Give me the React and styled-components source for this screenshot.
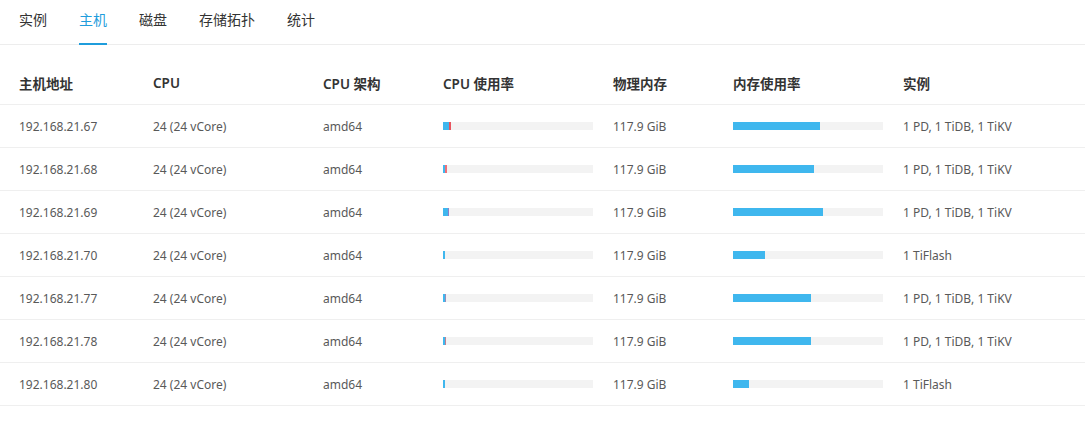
import React from "react";
import styled, { createGlobalStyle } from "styled-components";

const Global = createGlobalStyle`
  html, body { margin: 0; padding: 0; background: #fff; }
  body { font-family: "Noto Sans", "Noto Sans CJK SC", sans-serif; }
`;

const Page = styled.div`
  width: 1085px;
  background: #fff;
`;

const Tabs = styled.div`
  display: flex;
  gap: 32px;
  padding-left: 19px;
  height: 45px;
  border-bottom: 1px solid #ededed;
  box-sizing: border-box;
`;

const Tab = styled.div`
  position: relative;
  font-size: 14px;
  line-height: 40px;
  height: 44px;
  box-sizing: border-box;
  color: ${(p) => (p.$active ? "#1f9ddc" : "#333")};
  &::after {
    content: "";
    display: ${(p) => (p.$active ? "block" : "none")};
    position: absolute;
    left: 0;
    right: 0;
    bottom: -1px;
    height: 2px;
    background: #1f9ddc;
  }
`;

const Table = styled.div`
  margin-top: 16px;
`;

const Row = styled.div`
  display: grid;
  grid-template-columns: 134px 170px 120px 170px 120px 170px 1fr;
  height: ${(p) => (p.$head ? "44px" : "43px")};
  border-bottom: 1px solid #efefef;
  box-sizing: border-box;
  align-items: center;
`;

const Cell = styled.div`
  padding-left: 19px;
  font-size: ${(p) => (p.$head ? "13.5px" : "12px")};
  font-weight: ${(p) => (p.$head ? 600 : 400)};
  color: ${(p) => (p.$head ? "#333" : "#595959")};
  white-space: nowrap;
  padding-top: ${(p) => (p.$head ? "0" : "1px")};
`;

const Bar = styled.div`
  display: flex;
  width: 150px;
  height: 8px;
  background: #f3f3f3;
  margin-left: 19px;
  margin-top: -1px;
`;

const Seg = styled.div`
  height: 100%;
  background: ${(p) => p.$color};
`;

const BLUE = "#3fb7ee";

const rows = [
  { ip: "192.168.21.67", cpu: [[6, BLUE], [2, "#e9545e"]], mem: 87, inst: "1 PD, 1 TiDB, 1 TiKV" },
  { ip: "192.168.21.68", cpu: [[2, BLUE], [2, "#ee7078"]], mem: 81, inst: "1 PD, 1 TiDB, 1 TiKV" },
  { ip: "192.168.21.69", cpu: [[5, BLUE], [1, "#8f7fc8"]], mem: 90, inst: "1 PD, 1 TiDB, 1 TiKV" },
  { ip: "192.168.21.70", cpu: [[2, BLUE]], mem: 32, inst: "1 TiFlash" },
  { ip: "192.168.21.77", cpu: [[2, BLUE], [1, "#9a8bb8"]], mem: 78, inst: "1 PD, 1 TiDB, 1 TiKV" },
  { ip: "192.168.21.78", cpu: [[2, BLUE], [1, "#c07f92"]], mem: 78, inst: "1 PD, 1 TiDB, 1 TiKV" },
  { ip: "192.168.21.80", cpu: [[2, BLUE]], mem: 16, inst: "1 TiFlash" },
];

const heads = ["主机地址", "CPU", "CPU 架构", "CPU 使用率", "物理内存", "内存使用率", "实例"];

export default function App() {
  return (
    <Page>
      <Global />
      <Tabs>
        <Tab>实例</Tab>
        <Tab $active>主机</Tab>
        <Tab>磁盘</Tab>
        <Tab>存储拓扑</Tab>
        <Tab>统计</Tab>
      </Tabs>
      <Table>
        <Row $head>
          {heads.map((h) => (
            <Cell $head key={h}>{h}</Cell>
          ))}
        </Row>
        {rows.map((r) => (
          <Row key={r.ip}>
            <Cell>{r.ip}</Cell>
            <Cell>24 (24 vCore)</Cell>
            <Cell>amd64</Cell>
            <Bar>
              {r.cpu.map(([w, c], i) => (
                <Seg key={i} $color={c} style={{ width: w + "px" }} />
              ))}
            </Bar>
            <Cell>117.9 GiB</Cell>
            <Bar>
              <Seg $color={BLUE} style={{ width: r.mem + "px" }} />
            </Bar>
            <Cell>{r.inst}</Cell>
          </Row>
        ))}
      </Table>
    </Page>
  );
}
